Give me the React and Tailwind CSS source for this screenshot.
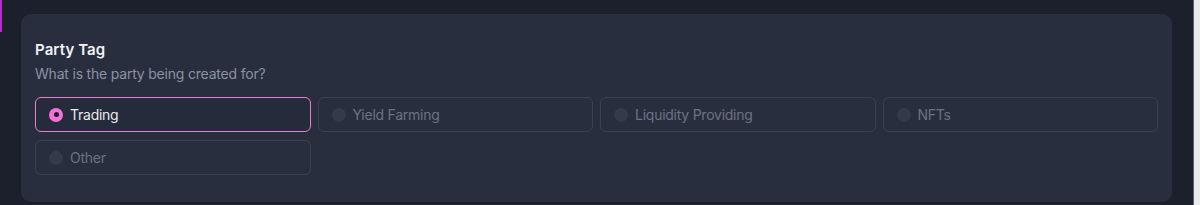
import React from "react";

const options = ["Trading", "Yield Farming", "Liquidity Providing", "NFTs", "Other"];

export default function App() {
  const selected = "Trading";
  return (
    <div
      className="relative flex w-[1200px] h-[205px] overflow-hidden bg-[#1b202c]"
      style={{ fontFamily: "Inter, 'Noto Sans', sans-serif" }}
    >
      <div className="absolute left-0 top-0 w-[2px] h-[32px] bg-[#c026d3]" />
      <div className="flex-1 pl-[21px] pr-[21px] pt-[14px]">
        <div className="h-[188px] rounded-[10px] bg-[#282e3e] px-[14px] pt-[27px]">
          <div className="text-[15px] leading-[18px] font-semibold text-[#f1f2f5] tracking-[0.1px]">Party Tag</div>
          <div className="mt-[6px] text-[14px] leading-[18px] tracking-[-0.2px] text-[#8b92a3]">
            What is the party being created for?
          </div>
          <div className="mt-[14px] grid grid-cols-4 gap-x-[7px] gap-y-[8px] w-[1123px]">
            {options.map((o) => {
              const sel = o === selected;
              return (
                <div
                  key={o}
                  className={
                    sel
                      ? "flex items-center h-[35px] rounded-[6px] border border-[#e67fd0] bg-[#252b3a] pl-[13px]"
                      : "flex items-center h-[35px] rounded-[6px] border border-[#3a4051] pl-[13px]"
                  }
                >
                  {sel ? (
                    <span className="flex items-center justify-center w-[14px] h-[14px] rounded-full bg-[#f472d8]">
                      <span className="w-[5px] h-[5px] rounded-full bg-[#1b1f2b]" />
                    </span>
                  ) : (
                    <span className="w-[14px] h-[14px] rounded-full bg-[#343a4a]" />
                  )}
                  <span
                    className={
                      sel
                        ? "ml-[7px] text-[14px] tracking-[-0.25px] text-[#e8eaef]"
                        : "ml-[7px] text-[14px] tracking-[-0.25px] text-[#6b7284]"
                    }
                  >
                    {o}
                  </span>
                </div>
              );
            })}
          </div>
        </div>
      </div>
      <div className="w-[1px] bg-[#5a5f6a]" />
      <div className="w-[7px] bg-[#e9eaec]" />
    </div>
  );
}
